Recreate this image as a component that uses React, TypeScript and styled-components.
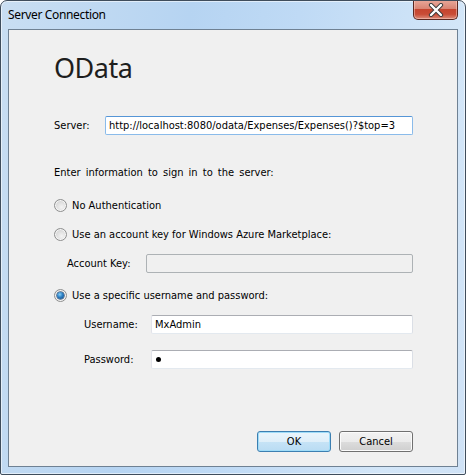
import React from "react";
import styled, { createGlobalStyle, css } from "styled-components";

const Global = createGlobalStyle`
  html, body { margin: 0; padding: 0; background: #ffffff; overflow: hidden; }
  * { box-sizing: border-box; }
`;

const uiFont = `"DejaVu Sans Condensed", "DejaVu Sans", "Liberation Sans", sans-serif`;

const Window = styled.div`
  width: 466px;
  height: 475px;
  display: flex;
  flex-direction: column;
  border: 1px solid #3f4d5c;
  border-radius: 7px 7px 2px 2px;
  background: linear-gradient(100deg, #c9def2 0%, #b6d4f2 35%, #bfdaf5 55%, #d3e6f8 85%, #cfe2f6 100%);
  box-shadow: inset 0 0 0 1px rgba(255, 255, 255, 0.55);
  overflow: hidden;
`;

const TitleBar = styled.div`
  position: relative;
  height: 28px;
  flex: none;
  display: flex;
  align-items: flex-start;
  padding: 6px 0 0 7px;
`;

const Title = styled.span`
  font-family: "Noto Sans", "Open Sans", sans-serif;
  font-size: 12px;
  line-height: 16px;
  color: #000;
  letter-spacing: -0.35px;
`;

const CloseButton = styled.div`
  position: absolute;
  top: -1px;
  right: 7px;
  width: 45px;
  height: 20px;
  border: 1px solid #5a2720;
  border-top: none;
  border-radius: 0 0 5px 5px;
  background: linear-gradient(to bottom, #e9a99b 0%, #d98574 45%, #c6452f 50%, #c94c36 75%, #dc8c7a 100%);
  box-shadow: inset 0 0 0 1px rgba(255, 220, 210, 0.45);
  display: flex;
  align-items: center;
  justify-content: center;
`;

const Client = styled.div`
  flex: 1;
  margin: 0 7px 7px 7px;
  border: 1px solid #6f8193;
  background: #f0f0f0;
  display: flex;
  flex-direction: column;
  padding: 0 44px 14px 45px;
  font-family: ${uiFont};
  font-size: 11px;
  color: #000;
`;

const Heading = styled.h1`
  margin: 21px 0 0 0;
  font-family: "Noto Sans", "Open Sans", sans-serif;
  font-weight: 400;
  font-size: 27px;
  line-height: 34px;
  color: #1e1e1e;
  letter-spacing: -0.5px;
`;

const Row = styled.div<{ $top: number; $indent?: number }>`
  display: flex;
  align-items: center;
  margin-top: ${(p) => p.$top}px;
  padding-left: ${(p) => p.$indent ?? 0}px;
`;

const Label = styled.span<{ $width: number }>`
  width: ${(p) => p.$width}px;
  flex: none;
  line-height: 13px;
  white-space: nowrap;
`;

const Text = styled.div<{ $top: number }>`
  margin-top: ${(p) => p.$top}px;
  line-height: 13px;
  word-spacing: 2px;
`;

const Field = styled.div<{ $state?: "focus" | "disabled" | "normal" }>`
  flex: 1;
  height: 19px;
  display: flex;
  align-items: center;
  padding: 0 3px;
  white-space: nowrap;
  overflow: hidden;
  border: 1px solid;
  border-radius: 2px;
  ${(p) =>
    p.$state === "focus"
      ? css`
          border-color: #5595d6 #8abbea #8abbea #8abbea;
          background: #fff;
        `
      : p.$state === "disabled"
      ? css`
          border-color: #adb2b5;
          background: #f0f0f0;
        `
      : css`
          border-color: #abadb3 #dbdfe6 #e3e9ef #e2e3ea;
          background: #fff;
        `}
`;

const Dot = styled.span`
  width: 5px;
  height: 5px;
  border-radius: 50%;
  background: #000;
  margin-left: 1px;
`;

const RadioRow = styled.label<{ $top: number }>`
  display: flex;
  align-items: center;
  gap: 5px;
  margin-top: ${(p) => p.$top}px;
  line-height: 13px;
`;

const RadioCircle = styled.span<{ $checked?: boolean }>`
  width: 13px;
  height: 13px;
  flex: none;
  border-radius: 50%;
  border: 1px solid #8e8f8f;
  background: radial-gradient(circle at 60% 65%, #f4f4f4 0%, #dcdcdc 55%, #c8c8c8 100%);
  display: flex;
  align-items: center;
  justify-content: center;
  box-shadow: inset 0 0 0 1px #f6f6f6;
  &::after {
    content: "";
    display: ${(p) => (p.$checked ? "block" : "none")};
    width: 7px;
    height: 7px;
    border-radius: 50%;
    background: radial-gradient(circle at 40% 35%, #8ad1f7 0%, #2b7fc4 45%, #0f3f77 100%);
    box-shadow: 0 0 0 0.5px #0b2f5a;
  }
`;

const ButtonBar = styled.div`
  margin-top: auto;
  display: flex;
  justify-content: flex-end;
  gap: 8px;
`;

const Button = styled.div<{ $default?: boolean }>`
  width: 74px;
  height: 21px;
  display: flex;
  align-items: center;
  justify-content: center;
  border-radius: 3px;
  border: 1px solid ${(p) => (p.$default ? "#3c7fb1" : "#707070")};
  background: ${(p) =>
    p.$default
      ? "linear-gradient(to bottom, #eaf5fc 0%, #dfeff9 50%, #c6e3f6 51%, #b9dcf3 100%)"
      : "linear-gradient(to bottom, #f2f2f2 0%, #ebebeb 50%, #dddddd 51%, #cfcfcf 100%)"};
  box-shadow: inset 0 0 0 1px ${(p) => (p.$default ? "#9fdcf8" : "#fbfbfb")};
  line-height: 13px;
`;

export default function App() {
  return (
    <>
      <Global />
      <Window>
        <TitleBar>
          <Title>Server Connection</Title>
          <CloseButton>
            <svg width="16" height="14" viewBox="0 0 16 14">
              <path d="M3 2 L13 12 M13 2 L3 12" stroke="#3a3a3a" strokeWidth="4.2" strokeLinecap="round" />
              <path d="M3 2 L13 12 M13 2 L3 12" stroke="#ffffff" strokeWidth="2.4" strokeLinecap="round" />
            </svg>
          </CloseButton>
        </TitleBar>
        <Client>
          <Heading>OData</Heading>
          <Row $top={31}>
            <Label $width={51}>Server:</Label>
            <Field $state="focus">http://localhost:8080/odata/Expenses/Expenses()?$top=3</Field>
          </Row>
          <Text $top={31}>Enter information to sign in to the server:</Text>
          <RadioRow $top={20}>
            <RadioCircle />
            No Authentication
          </RadioRow>
          <RadioRow $top={16}>
            <RadioCircle />
            Use an account key for Windows Azure Marketplace:
          </RadioRow>
          <Row $top={13} $indent={13}>
            <Label $width={79}>Account Key:</Label>
            <Field $state="disabled" />
          </Row>
          <RadioRow $top={16}>
            <RadioCircle $checked />
            Use a specific username and password:
          </RadioRow>
          <Row $top={13} $indent={30}>
            <Label $width={67}>Username:</Label>
            <Field>MxAdmin</Field>
          </Row>
          <Row $top={16} $indent={30}>
            <Label $width={67}>Password:</Label>
            <Field>
              <Dot />
            </Field>
          </Row>
          <ButtonBar>
            <Button $default>OK</Button>
            <Button>Cancel</Button>
          </ButtonBar>
        </Client>
      </Window>
    </>
  );
}
